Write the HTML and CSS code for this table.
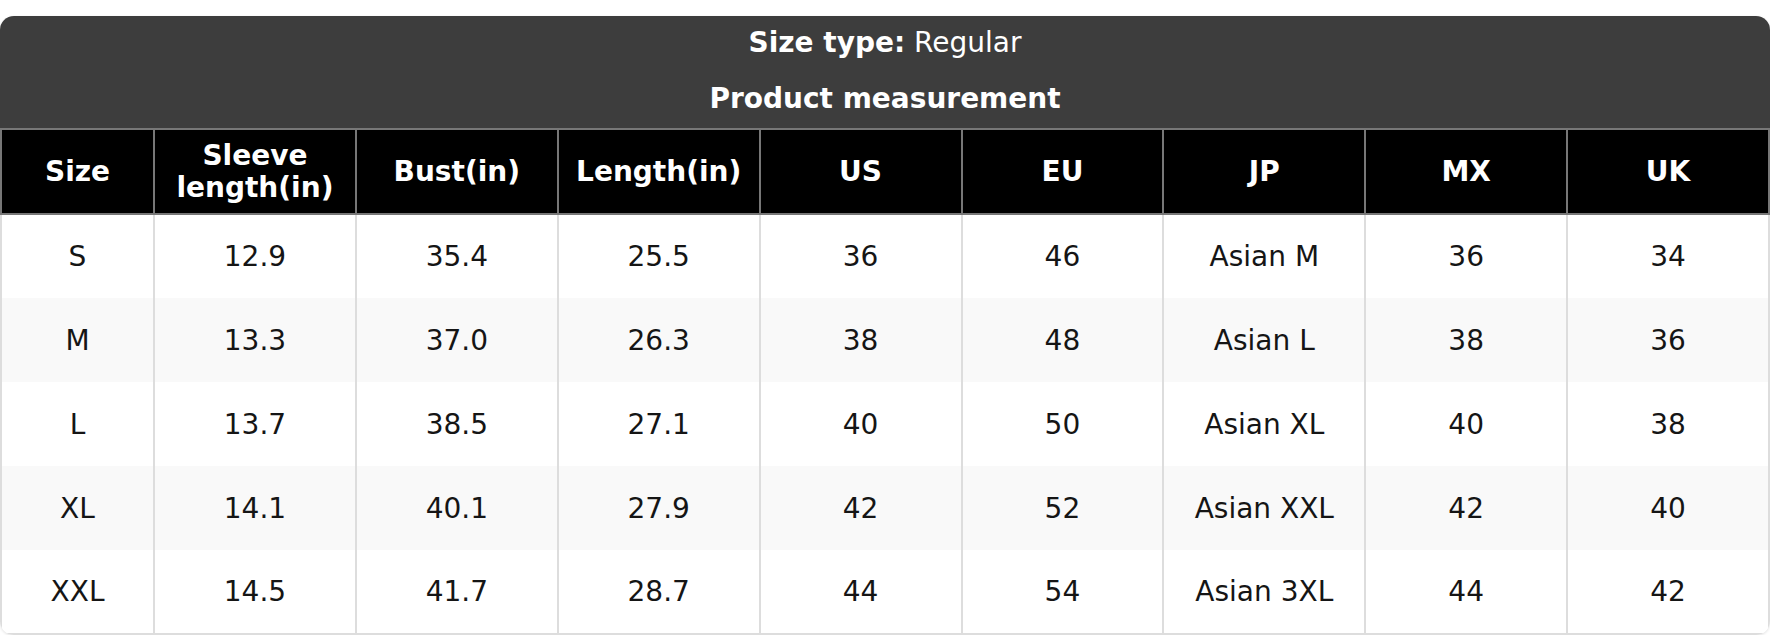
FILE: index.html
```html
<!DOCTYPE html>
<html lang="en">
<head>
<meta charset="utf-8">
<title>Size chart</title>
<link rel="stylesheet" href="styles.css">
</head>
<body>
<div class="chart">
  <div class="chart-head">
    <div class="chart-line"><strong>Size type:</strong> Regular</div>
    <div class="chart-line chart-title">Product measurement</div>
  </div>
  <table class="size-table">
    <colgroup>
      <col class="col-first">
      <col><col><col><col><col><col><col><col>
    </colgroup>
    <thead>
      <tr>
        <th>Size</th>
        <th>Sleeve<br>length(in)</th>
        <th>Bust(in)</th>
        <th>Length(in)</th>
        <th>US</th>
        <th>EU</th>
        <th>JP</th>
        <th>MX</th>
        <th>UK</th>
      </tr>
    </thead>
    <tbody>
      <tr><td>S</td><td>12.9</td><td>35.4</td><td>25.5</td><td>36</td><td>46</td><td>Asian M</td><td>36</td><td>34</td></tr>
      <tr><td>M</td><td>13.3</td><td>37.0</td><td>26.3</td><td>38</td><td>48</td><td>Asian L</td><td>38</td><td>36</td></tr>
      <tr><td>L</td><td>13.7</td><td>38.5</td><td>27.1</td><td>40</td><td>50</td><td>Asian XL</td><td>40</td><td>38</td></tr>
      <tr><td>XL</td><td>14.1</td><td>40.1</td><td>27.9</td><td>42</td><td>52</td><td>Asian XXL</td><td>42</td><td>40</td></tr>
      <tr><td>XXL</td><td>14.5</td><td>41.7</td><td>28.7</td><td>44</td><td>54</td><td>Asian 3XL</td><td>44</td><td>42</td></tr>
    </tbody>
  </table>
</div>
</body>
</html>
```
FILE: styles.css
```css
html, body {
  margin: 0;
  padding: 0;
  background: #ffffff;
}

body {
  font-family: "DejaVu Sans", Verdana, sans-serif;
  color: #151515;
}

.chart {
  margin-top: 16px;
  width: 1770px;
  border-radius: 14px;
  overflow: hidden;
  box-shadow: 0 1px 3px rgba(0, 0, 0, 0.12);
}

.chart-head {
  background: #3d3d3d;
  color: #ffffff;
  text-align: center;
  padding: 9px 0 11px;
  font-size: 28px;
}

.chart-line {
  line-height: 36px;
}

.chart-title {
  margin-top: 20px;
  font-weight: bold;
}

.size-table {
  width: 100%;
  border-collapse: collapse;
  table-layout: fixed;
  font-size: 28px;
}

.col-first {
  width: 153px;
}

.size-table th {
  background: #000000;
  color: #ffffff;
  font-weight: bold;
  border: 2px solid #777777;
  height: 85px;
  padding: 0;
  line-height: 32px;
  text-align: center;
  vertical-align: middle;
  box-sizing: border-box;
}

.size-table td {
  border: 2px solid #dddddd;
  border-top: 0;
  border-bottom: 0;
  height: 84px;
  padding: 0;
  text-align: center;
  vertical-align: middle;
  box-sizing: border-box;
}

.size-table tbody tr:last-child td {
  border-bottom: 2px solid #dddddd;
}

.size-table tbody tr:nth-child(even) td {
  background: #f9f9f9;
}
```
